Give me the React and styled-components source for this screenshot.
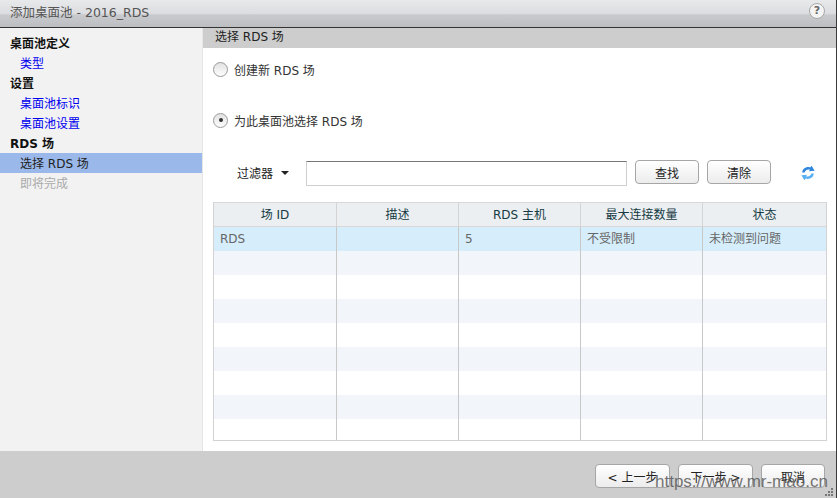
import React from "react";
import styled, { createGlobalStyle } from "styled-components";

const GlobalStyle = createGlobalStyle`
  html, body {
    margin: 0;
    padding: 0;
    height: 100%;
    overflow: hidden;
    background: #fff;
  }
  #root {
    height: 100%;
  }
  * {
    box-sizing: border-box;
  }
`;

const Dialog = styled.div`
  position: relative;
  width: 837px;
  height: 498px;
  display: flex;
  flex-direction: column;
  border-right: 1px solid #3a3a3a;
  font-family: "DejaVu Sans", "Noto Sans CJK SC", sans-serif;
  font-size: 12px;
  color: #222;
  overflow: hidden;
`;

const TitleBar = styled.div`
  height: 28px;
  flex: none;
  display: flex;
  align-items: center;
  justify-content: space-between;
  padding: 0 11px 5px 10px;
  background: linear-gradient(#e8e9eb 0%, #dcdde0 50%, #c9cacd 55%, #bdbec1 100%);
  border-bottom: 1px solid #333;
  color: #555;
  font-size: 12.5px;
`;

const HelpIcon = styled.div`
  width: 16px;
  height: 16px;
  border-radius: 50%;
  border: 1px solid #a8a8a8;
  background: #f4f4f4;
  color: #666;
  font-size: 11px;
  font-weight: bold;
  line-height: 14px;
  text-align: center;
`;

const Body = styled.div`
  flex: 1;
  display: flex;
  min-height: 0;
`;

const Sidebar = styled.nav`
  width: 203px;
  flex: none;
  padding-top: 5px;
  background: #f2f2f2;
  border-right: 1px solid #e6e6e6;
`;

const SideHeading = styled.div`
  height: 20px;
  line-height: 22px;
  padding-left: 10px;
  font-weight: bold;
  color: #111;
`;

const SideLink = styled.a`
  display: block;
  height: 20px;
  line-height: 22px;
  padding-left: 20px;
  color: ${(p) => (p.$disabled ? "#aaa" : p.$active ? "#222" : "#0000ee")};
  background: ${(p) => (p.$active ? "#9ab8e9" : "transparent")};
`;

const Main = styled.main`
  flex: 1;
  min-width: 0;
  display: flex;
  flex-direction: column;
  background: #fff;
`;

const SectionTitle = styled.div`
  height: 20px;
  flex: none;
  line-height: 19px;
  padding-left: 12px;
  background: #cdcdcd;
  color: #222;
`;

const Content = styled.div`
  flex: 1;
  padding: 12px 10px 0 10px;
`;

const RadioRow = styled.label`
  display: flex;
  align-items: center;
  gap: 6px;
  height: 18px;
  margin-bottom: ${(p) => p.$gap || 0}px;
  color: #333;
`;

const RadioMark = styled.span`
  width: 15px;
  height: 15px;
  flex: none;
  border-radius: 50%;
  border: 1px solid #9a9a9a;
  background: linear-gradient(#e2e2e2, #fdfdfd);
  display: flex;
  align-items: center;
  justify-content: center;

  &::after {
    content: "";
    width: 4px;
    height: 4px;
    border-radius: 50%;
    background: ${(p) => (p.$checked ? "#333" : "transparent")};
  }
`;

const FilterBar = styled.div`
  display: flex;
  align-items: flex-start;
  height: 25px;
  margin-bottom: 17px;
`;

const FilterMenu = styled.div`
  width: 93px;
  height: 25px;
  flex: none;
  padding-left: 24px;
  display: flex;
  align-items: center;
  gap: 8px;
  color: #222;

  &::after {
    content: "";
    border-left: 4px solid transparent;
    border-right: 4px solid transparent;
    border-top: 4px solid #222;
  }
`;

const FilterInput = styled.input`
  width: 321px;
  height: 25px;
  flex: none;
  margin: 1px 8px 0 0;
  padding: 0 4px;
  border: 1px solid #cfcfcf;
  border-top-color: #777;
  outline: none;
  background: #fff;
`;

const Button = styled.button`
  width: ${(p) => p.$width || 64}px;
  height: 24px;
  flex: none;
  padding: 0;
  margin-right: ${(p) => p.$gap || 0}px;
  border: 1px solid #a6a6a6;
  border-radius: 4px;
  background: linear-gradient(#fff, #ececec);
  color: #222;
  font: inherit;
`;

const RefreshIcon = styled.svg`
  margin: 5px 0 0 29px;
  flex: none;
`;

const TableGrid = styled.div`
  width: 614px;
  height: 239px;
  display: flex;
  flex-direction: column;
  border: 1px solid #d2d2d2;
  border-top-color: #d8d8d8;
  overflow: hidden;
`;

const Row = styled.div`
  display: grid;
  grid-template-columns: 123px 122px 122px 122px 1fr;
  height: 24px;
  flex: none;
  background: ${(p) =>
    p.$head ? "#ebeff2" : p.$selected ? "#d6eefc" : p.$odd ? "#f2f6fb" : "#fff"};
  border-bottom: ${(p) => (p.$head ? "1px solid #d8d8d8" : "none")};
`;

const HeadCell = styled.div`
  border-right: 1px solid #d4d4d4;
  line-height: 25px;
  text-align: center;
  color: #163a42;

  &:last-child {
    border-right: none;
  }
`;

const Cell = styled.div`
  border-right: 1px solid #c8c8c8;
  padding-left: 6px;
  line-height: 24px;
  color: #666;

  &:last-child {
    border-right: none;
  }
`;

const Footer = styled.div`
  height: 47px;
  flex: none;
  display: flex;
  justify-content: flex-end;
  align-items: flex-start;
  padding: 13px 11px 0 0;
  background: #cdcdcd;
`;

const Watermark = styled.div`
  position: absolute;
  left: 655px;
  top: 472px;
  font-family: "Liberation Sans", sans-serif;
  font-size: 17px;
  line-height: 20px;
  color: rgba(90, 90, 90, 0.85);
  white-space: nowrap;
`;

const Grip = styled.svg`
  position: absolute;
  right: 2px;
  bottom: 1px;
`;

const columns = ["场 ID", "描述", "RDS 主机", "最大连接数量", "状态"];
const firstRow = ["RDS", "", "5", "不受限制", "未检测到问题"];

export default function App() {
  return (
    <>
      <GlobalStyle />
      <Dialog>
        <TitleBar>
          <span>添加桌面池 - 2016_RDS</span>
          <HelpIcon>?</HelpIcon>
        </TitleBar>
        <Body>
          <Sidebar>
            <SideHeading>桌面池定义</SideHeading>
            <SideLink>类型</SideLink>
            <SideHeading>设置</SideHeading>
            <SideLink>桌面池标识</SideLink>
            <SideLink>桌面池设置</SideLink>
            <SideHeading>RDS 场</SideHeading>
            <SideLink $active>选择 RDS 场</SideLink>
            <SideLink $disabled>即将完成</SideLink>
          </Sidebar>
          <Main>
            <SectionTitle>选择 RDS 场</SectionTitle>
            <Content>
              <RadioRow $gap={33}>
                <RadioMark />
                创建新 RDS 场
              </RadioRow>
              <RadioRow $gap={31}>
                <RadioMark $checked />
                为此桌面池选择 RDS 场
              </RadioRow>
              <FilterBar>
                <FilterMenu>过滤器</FilterMenu>
                <FilterInput />
                <Button $gap={8}>查找</Button>
                <Button>清除</Button>
                <RefreshIcon width="16" height="16" viewBox="0 0 16 16">
                  <path d="M2.2 7.5 C2.5 3.6 6.5 1 10.2 2.4 L11.6 .8 L14.6 5.8 L8.8 6.2 L10 4.8 C7.6 4 5.4 5.2 4.6 7.5 Z" fill="#2f86dc" />
                  <path d="M13.8 8.5 C13.5 12.4 9.5 15 5.8 13.6 L4.4 15.2 L1.4 10.2 L7.2 9.8 L6 11.2 C8.4 12 10.6 10.8 11.4 8.5 Z" fill="#5ab0f2" />
                </RefreshIcon>
              </FilterBar>
              <TableGrid>
                <Row $head>
                  {columns.map((c) => (
                    <HeadCell key={c}>{c}</HeadCell>
                  ))}
                </Row>
                {Array.from({ length: 9 }, (_, i) => (
                  <Row key={i} $selected={i === 0} $odd={i % 2 === 1}>
                    {firstRow.map((v, j) => (
                      <Cell key={j}>{i === 0 ? v : ""}</Cell>
                    ))}
                  </Row>
                ))}
              </TableGrid>
            </Content>
          </Main>
        </Body>
        <Footer>
          <Button $width={75} $gap={8}>&lt; 上一步</Button>
          <Button $width={75} $gap={8}>下一步 &gt;</Button>
          <Button $width={64}>取消</Button>
        </Footer>
        <Watermark>https://www.mr-mao.cn</Watermark>
        <Grip width="10" height="10" viewBox="0 0 10 10">
          <rect x="7" y="1" width="2" height="2" fill="#777" />
          <rect x="4" y="4" width="2" height="2" fill="#777" />
          <rect x="7" y="4" width="2" height="2" fill="#777" />
          <rect x="1" y="7" width="2" height="2" fill="#777" />
          <rect x="4" y="7" width="2" height="2" fill="#777" />
          <rect x="7" y="7" width="2" height="2" fill="#777" />
        </Grip>
      </Dialog>
    </>
  );
}
